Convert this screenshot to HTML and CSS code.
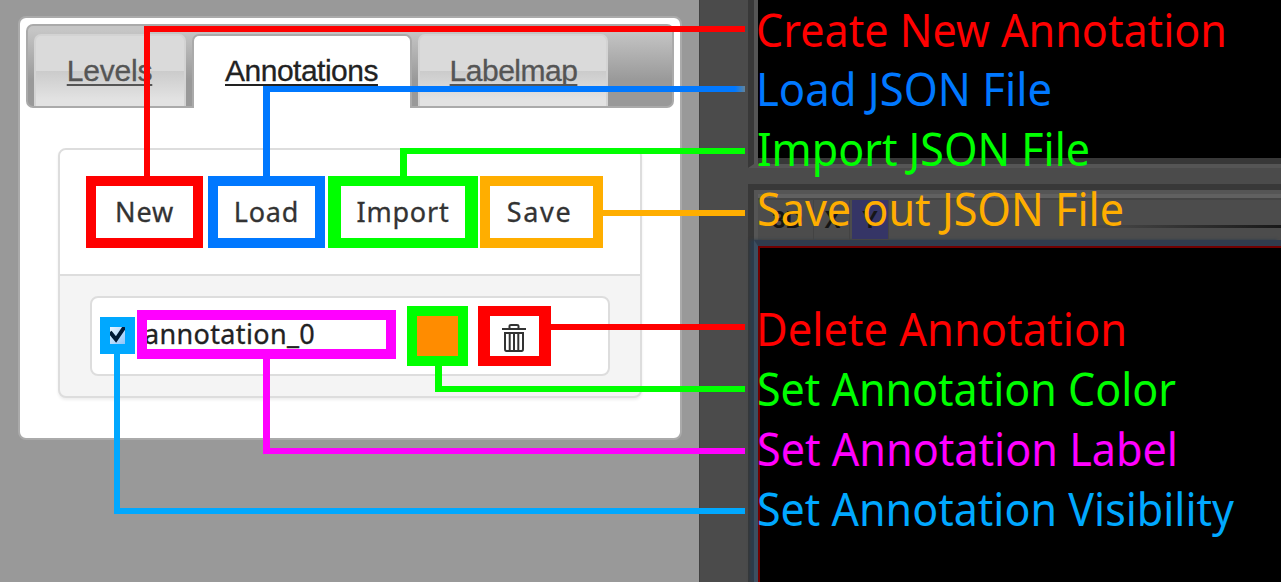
FILE: index.html
```html
<!DOCTYPE html>
<html lang="en">
<head>
<meta charset="utf-8">
<title>Annotations</title>
<link rel="stylesheet" href="styles.css">
</head>
<body>
<main class="screen">
  <section class="sidebar">
    <div class="panel">
      <nav class="tabs">
        <a class="tab levels">Levels</a>
        <a class="tab active">Annotations</a>
        <a class="tab labelmap">Labelmap</a>
      </nav>
      <div class="card">
        <div class="actions">
          <button class="action new">New</button>
          <button class="action load">Load</button>
          <button class="action import">Import</button>
          <button class="action save">Save</button>
        </div>
        <div class="list">
          <div class="row">
            <span class="check"><svg width="15" height="17" viewBox="0 0 15 17"><path d="M0 5 L6 12.500 L14.500 0" fill="none" stroke="#001a35" stroke-width="4"/></svg></span>
            <span class="name">annotation_0</span>
            <span class="color"></span>
            <span class="trash"><svg width="24" height="30" viewBox="0 0 24 30" fill="none" stroke="#333"><path d="M0 7H24" stroke-width="2"/><path d="M7.500 6V4Q7.500 3 9 3H15Q16.500 3 16.500 4V6" stroke-width="2"/><path d="M3 11H21V27Q21 29 19.500 29H4.500Q3 29 3 27Z" stroke-width="2"/><path d="M7.700 11V28M12 11V28M16.300 11V28" stroke-width="2"/></svg></span>
          </div>
        </div>
      </div>
    </div>
  </section>
  <section class="views">
    <div class="view upper"></div>
    <div class="view lower">
      <div class="toolbar"><span class="mode">3D</span><span class="mode x">X</span><span class="mode on">Y</span></div>
      <div class="canvas"></div>
    </div>
  </section>
  <svg class="callouts" width="1281" height="582" viewBox="0 0 1281 582">
    <defs><linearGradient id="fade" gradientUnits="userSpaceOnUse" x1="735" x2="746" y1="0" y2="0"><stop offset="0" stop-color="#0078ff"/><stop offset="1" stop-color="#6b8591"/></linearGradient></defs>
    <path fill="#f00" d="M144 176V26H745V32H150V176ZM551 324H745V330H551Z"/>
    <path fill="url(#fade)" d="M263 176V86H745V92H270V176Z"/>
    <path fill="#0f0" d="M400 176V148H745V154H407V176ZM435 366H442V386H745V392H435Z"/>
    <path fill="#ffae00" d="M603 210H745V216H603Z"/>
    <path fill="#f0f" d="M263 359H270V448H745V454H263Z"/>
    <path fill="#00a8ff" d="M114 354H120V508H745V514H114Z"/>
    <g class="captions">
      <text x="756" y="47" fill="#f00" textLength="471" lengthAdjust="spacingAndGlyphs">Create New Annotation</text>
      <text x="756" y="106" fill="#0078ff" textLength="296" lengthAdjust="spacingAndGlyphs">Load JSON File</text>
      <text x="757" y="166" fill="#0f0" textLength="333" lengthAdjust="spacingAndGlyphs">Import JSON File</text>
      <text x="757" y="226" fill="#ffae00" textLength="367" lengthAdjust="spacingAndGlyphs">Save out JSON File</text>
      <text x="756" y="346" fill="#f00" textLength="371" lengthAdjust="spacingAndGlyphs">Delete Annotation</text>
      <text x="757" y="406" fill="#0f0" textLength="419" lengthAdjust="spacingAndGlyphs">Set Annotation Color</text>
      <text x="757" y="466" fill="#f0f" textLength="421" lengthAdjust="spacingAndGlyphs">Set Annotation Label</text>
      <text x="757" y="526" fill="#00a8ff" textLength="477" lengthAdjust="spacingAndGlyphs">Set Annotation Visibility</text>
    </g>
  </svg>
</main>
</body>
</html>
```

FILE: styles.css
```css
* { box-sizing: border-box; }
body { margin: 0; }
.screen { position: relative; display: flex; width: 1281px; height: 582px; overflow: hidden; background: #4b4b4b; }
.sidebar { width: 699px; padding: 16px 17px 0 18px; background: #999; }
.panel { height: 424px; padding: 6px; border: 2px solid #aaa; border-radius: 8px; background: #fff; }
.tabs { display: flex; gap: 6px; height: 84px; padding: 8px 6px 0; border: 2px solid #aaa; border-radius: 7px; background: linear-gradient(#c6c6c6 5%, #999 68%); }
.tab { height: 72px; border: 2px solid #d3d3d3; border-bottom: 0; border-radius: 7px 7px 0 0; background: linear-gradient(#dadada 50%, #cbcbcb 50%, #e2e2e2 90%); color: #555; font: 30px/69px "Liberation Sans", Arial, sans-serif; letter-spacing: -0.5px; text-align: center; text-decoration: underline; text-decoration-thickness: 2px; text-underline-offset: 3px; -webkit-text-stroke: .3px; text-decoration-skip-ink: none; }
.levels { width: 152px; padding-right: 1px; letter-spacing: -0.2px; }
.active { width: 220px; height: 74px; padding-right: 1px; border-color: #aaa; background: #fff; color: #222; }
.labelmap { width: 190px; padding-left: 1px; }
.card { width: 584px; height: 250px; margin: 40px 0 0 32px; border: 2px solid #ddd; border-radius: 8px; background: #f4f4f4; box-shadow: 0 2px 3px #eee; overflow: hidden; }
.actions { display: flex; height: 126px; padding: 26px; border-bottom: 2px solid #ddd; background: #fff; }
.action { height: 72px; padding: 0; border: 10px solid; background: #fff; color: #333; font: 27px/52px "Noto Sans", sans-serif; letter-spacing: .8px; -webkit-text-stroke: .3px; }
.new { width: 117px; margin-right: 5px; border-color: #f00; }
.load { width: 117px; margin-right: 3px; border-color: #0078ff; }
.import { width: 150px; margin-right: 2px; border-color: #0f0; border-width: 10px 13px; }
.save { width: 123px; padding-right: 4px; border-color: #ffae00; letter-spacing: 1.7px; }
.new, .load, .import, .save { color: #333; }
.list { padding: 20px 30px; }
.row { display: flex; align-items: flex-start; width: 520px; height: 80px; padding: 8px; border: 2px solid #ddd; border-radius: 8px; background: #fff; }
.check { width: 35px; height: 37px; margin: 11px 2px 0 0; border: 10px solid #00a8ff; background: linear-gradient(135deg, #eaf5ff, #8dc5fa); }
.check svg, .trash svg { display: block; }
.name { width: 259px; height: 49px; margin: 4px 11px 0 0; border: 10px solid #f0f; overflow: hidden; color: #222; font: 27px/27px "Noto Sans", sans-serif; letter-spacing: .35px; text-indent: -3px; white-space: nowrap; -webkit-text-stroke: .3px; }
.color { width: 61px; height: 60px; margin-right: 10px; border: 10px solid #0f0; background: #ff8c00; }
.trash { width: 73px; height: 60px; padding: 6px 12px; border: 10px solid #f00; border-width: 10px 12px; }
.views { flex: 1; padding-left: 48px; border-left: 1px solid #404040; }
.view { border-left: 6px solid #383838; }
.upper { height: 168px; background: #000; border-bottom: 4px solid #555; box-shadow: inset 4px 0 #555, inset 0 -6px #383838; }
.lower { height: 398px; margin-top: 16px; border-top: 6px solid #383838; background: #555; }
.toolbar { display: flex; gap: 2px; height: 50px; margin-left: 4px; padding: 6px 0 0 4px; border-top: 4px solid #555; box-shadow: inset 0 4px #606060, inset 0 6px #444; background: linear-gradient(90deg, transparent 62%, #191919) 0 31px / 100% 3px no-repeat #4c4c4c; }
.mode { width: 52px; height: 40px; border-right: 1px solid #434343; border-bottom: 1px solid #454545; color: #151515; font: bold 24px/40px "Liberation Sans", sans-serif; text-align: center; }
.x { width: 34px; }
.on { width: 37px; background: #353566; }
.canvas { height: 342px; border-top: 6px solid #303c4d; border-left: 4px solid #3c4e60; background: #000; box-shadow: inset 2px 2px #700000, -4px 0 3px #2c3b4b; }
.callouts { position: absolute; inset: 0; }
.captions { font: 46px "Noto Sans", sans-serif; }
```
